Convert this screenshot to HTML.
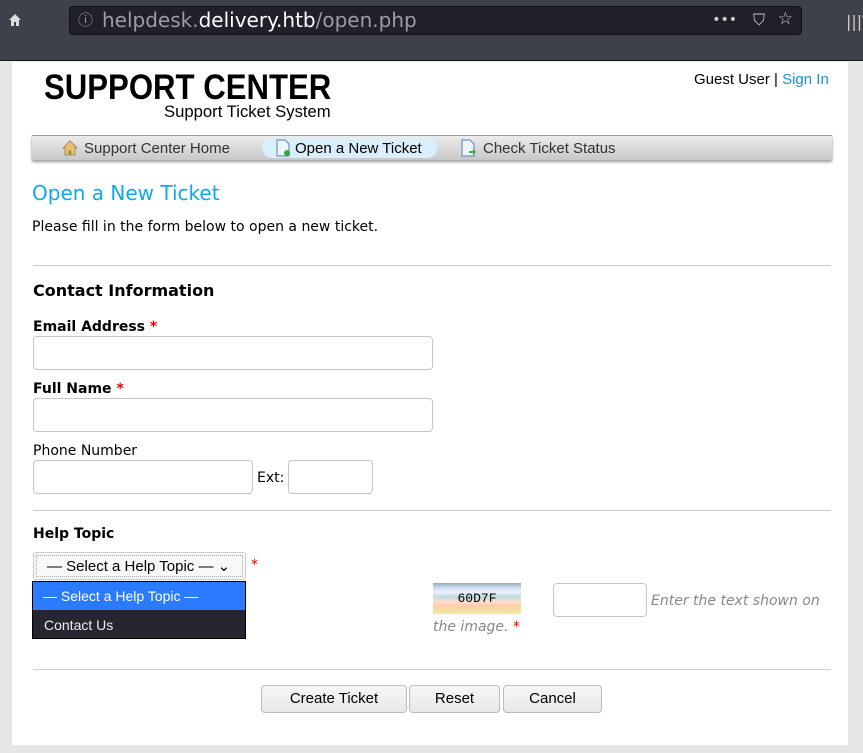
<!DOCTYPE html>
<html><head><meta charset="utf-8"><style>
*{box-sizing:border-box;margin:0;padding:0}
body{width:863px;height:753px;background:#e6e6e6;position:relative;overflow:hidden;font-family:"DejaVu Sans",Verdana,sans-serif;font-size:14px;color:#000}
.a{position:absolute}
.top{left:0;top:0;width:863px;height:61px;background:#3f4148;border-bottom:1px solid #1a1a1a}
.url{left:69px;top:6px;width:733px;height:29px;background:#1f2029;border:1px solid #111;border-radius:4px;font-family:"DejaVu Sans",sans-serif;font-size:20px;color:#9a9ca8;line-height:27px;padding-left:32px}
.page{left:12px;top:62px;width:836px;height:683px;background:#fff}
input.t{position:absolute;height:34px;border:1px solid #c8c6c4;border-radius:4px;background:#fff}
.lbl{font-weight:bold;font-size:14px}
.req{color:#e00}
.btn{position:absolute;top:685px;height:28px;border:1px solid #bbb;border-radius:4px;background:linear-gradient(#f6f6f6,#e8e8e8);text-align:center;line-height:26px;font-family:"Liberation Sans",sans-serif;font-size:15px}
.hr{position:absolute;left:33px;width:798px;height:1px;background:#ccc}
.nav{font-family:'Liberation Sans',sans-serif;font-size:15px}
</style></head><body>
<div class="a top"></div>
<svg class="a" style="left:7px;top:12px" width="16" height="16" viewBox="0 0 16 16"><path d="M8 2L2 8h2v6h3v-4h2v4h3V8h2z" fill="#ddd"/></svg>
<div class="a url"><span style="position:absolute;left:8px;top:0;font-size:15px">ⓘ</span>helpdesk.<span style="color:#fff">delivery.htb</span>/open.php
<span style="position:absolute;right:64px;top:0;font-size:14px;color:#ccc">•••</span>
<span style="position:absolute;right:36px;top:-1px;font-size:16px;color:#ccc">⛉</span>
<span style="position:absolute;right:8px;top:-1px;font-size:17px;color:#ccc">☆</span></div>
<div class="a" style="left:846px;top:12px;color:#ccc;font-size:16px">|||\</div>
<div class="a page"></div>
<div class="a" style="left:44px;top:68px;font-family:'Liberation Sans',sans-serif;font-weight:bold;font-size:35px;transform:scaleX(0.89);transform-origin:left">SUPPORT CENTER</div>
<div class="a" style="left:164px;top:102px;font-family:'Liberation Sans',sans-serif;font-size:17px;transform:scaleX(0.98);transform-origin:left">Support Ticket System</div>
<div class="a" style="left:694px;top:71px;font-family:'Liberation Sans',sans-serif;font-size:15px">Guest User | <span style="color:#1a8fd8">Sign In</span></div>
<div class="a" style="left:32px;top:135px;width:800px;height:25px;background:linear-gradient(#ececec,#c8c8c8);border-top:1px solid #999;box-shadow:0 2px 3px #999"></div>
<div class="a" style="left:262px;top:138px;width:175px;height:20px;background:#dbeefb;border-radius:10px"></div>
<svg class="a" style="left:62px;top:140px" width="16" height="16" viewBox="0 0 16 16"><path d="M8 1L1 8h2v7h4v-4h2v4h4V8h2z" fill="#e8c070" stroke="#a86" stroke-width="1"/><rect x="7" y="11" width="2" height="4" fill="#6a4"/></svg>
<div class="a nav" style="left:84px;top:140px;color:#333">Support Center Home</div>
<svg class="a" style="left:276px;top:139px" width="14" height="18" viewBox="0 0 14 18"><path d="M1 1h8l4 4v12H1z" fill="#eef4fb" stroke="#5a7fa8"/><circle cx="11" cy="14" r="3" fill="#3a3"/></svg>
<div class="a nav" style="left:295px;top:140px">Open a New Ticket</div>
<svg class="a" style="left:461px;top:139px" width="16" height="18" viewBox="0 0 16 18"><path d="M1 1h8l4 4v12H1z" fill="#eef4fb" stroke="#5a7fa8"/><path d="M8 12h4v-2l3 3-3 3v-2H8z" fill="#4a4"/></svg>
<div class="a nav" style="left:483px;top:140px;color:#333">Check Ticket Status</div>
<div class="a" style="left:32px;top:181px;font-size:20px;color:#0fa8e8">Open a New Ticket</div>
<div class="a" style="left:32px;top:219px;font-size:14px">Please fill in the form below to open a new ticket.</div>
<div class="hr" style="top:265px"></div>
<div class="a lbl" style="left:33px;top:281px;font-size:16px">Contact Information</div>
<div class="a lbl" style="left:33px;top:319px">Email Address <span class="req">*</span></div>
<input class="t" style="left:33px;top:336px;width:400px">
<div class="a lbl" style="left:33px;top:381px">Full Name <span class="req">*</span></div>
<input class="t" style="left:33px;top:398px;width:400px">
<div class="a" style="left:33px;top:443px">Phone Number</div>
<input class="t" style="left:33px;top:460px;width:220px">
<div class="a" style="left:257px;top:470px">Ext:</div>
<input class="t" style="left:288px;top:460px;width:85px">
<div class="hr" style="top:510px"></div>
<div class="a lbl" style="left:33px;top:526px">Help Topic</div>
<div class="a" style="left:33px;top:552px;width:213px;height:28px;border:1px solid #ccc;border-radius:3px;background:#f8f8f8"><div style="margin:2px;border:1px dotted #aaa;height:22px;font-family:'Liberation Sans',sans-serif;font-size:15px;line-height:21px;padding-left:10px">— Select a Help Topic — ⌄</div></div>
<div class="a req" style="left:251px;top:557px">*</div>
<div class="a" style="left:32px;top:581px;width:214px;height:58px;background:#25262f;border:1px solid #000"></div>
<div class="a" style="left:33px;top:582px;width:212px;height:28px;background:#2a7bff;color:#fff;font-family:'Liberation Sans',sans-serif;font-size:14px;line-height:28px;padding-left:10px">— Select a Help Topic —</div>
<div class="a" style="left:44px;top:617px;color:#eee;font-family:'Liberation Sans',sans-serif;font-size:14px">Contact Us</div>
<div class="a" style="left:433px;top:583px;width:88px;height:31px;background:linear-gradient(#9ab 0,#cde 15%,#eef 30%,#bdd 45%,#fdc 60%,#fca 75%,#ee9 100%);font-family:'Liberation Mono',monospace;font-size:13px;text-align:center;line-height:31px">60D7F</div>
<input class="t" style="left:553px;top:583px;width:94px">
<div class="a" style="left:651px;top:593px;font-style:italic;color:#888">Enter the text shown on</div>
<div class="a" style="left:433px;top:619px;font-style:italic;color:#888">the image. <span class="req">*</span></div>
<div class="hr" style="top:669px"></div>
<div class="btn" style="left:261px;width:146px">Create Ticket</div>
<div class="btn" style="left:409px;width:91px">Reset</div>
<div class="btn" style="left:503px;width:99px">Cancel</div>
</body></html>
